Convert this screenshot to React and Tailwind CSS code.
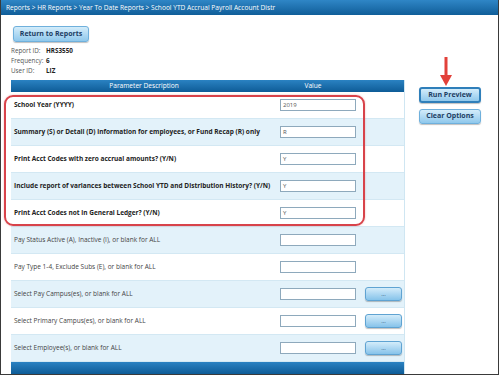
import React from 'react';

const rows = [
    { label: 'School Year (YYYY)', value: '2019', bold: true },
    { label: 'Summary (S) or Detail (D) information for employees, or Fund Recap (R) only', value: 'R', bold: true },
    { label: 'Print Acct Codes with zero accrual amounts? (Y/N)', value: 'Y', bold: true },
    { label: 'Include report of variances between School YTD and Distribution History? (Y/N)', value: 'Y', bold: true },
    { label: 'Print Acct Codes not in General Ledger? (Y/N)', value: 'Y', bold: true },
    { label: 'Pay Status Active (A), Inactive (I), or blank for ALL', value: '' },
    { label: 'Pay Type 1-4, Exclude Subs (E), or blank for ALL', value: '' },
    { label: 'Select Pay Campus(es), or blank for ALL', value: '', picker: true },
    { label: 'Select Primary Campus(es), or blank for ALL', value: '', picker: true },
    { label: 'Select Employee(s), or blank for ALL', value: '', picker: true },
];

const btn = 'flex items-center justify-center rounded-[3px] bg-gradient-to-b from-[#d3ecfa] to-[#8fc8ec] text-[#1d3d63] font-bold shadow-[0_1px_1px_rgba(0,0,0,0.25)]';

const App = () => {
    return (
        <div className="relative w-[499px] h-[375px] overflow-hidden border-r border-b border-l border-[#3a3a3a] bg-white font-['Open_Sans',sans-serif]">
            <div className="h-[15px] bg-gradient-to-b from-[#2f86c6] to-[#0f5e99] text-white text-[6.6px] leading-[15px] pl-[5px] whitespace-nowrap">
                Reports &gt; HR Reports &gt; Year To Date Reports &gt; School YTD Accrual Payroll Account Distr
            </div>

            <div className="flex">
                <div className="ml-[10px] w-[394px]">
                    <button className={`${btn} mt-[11px] ml-[2px] w-[76px] h-[16px] border border-[#6fb0dc] text-[7px]`}>
                        Return to Reports
                    </button>

                    <div className="mt-[4px] text-[6.3px] leading-[10px] text-[#555]">
                        <div className="flex"><span className="w-[35px]">Report ID:</span><span className="font-bold text-[#222]">HRS3550</span></div>
                        <div className="flex"><span className="w-[35px]">Frequency:</span><span className="font-bold text-[#222]">6</span></div>
                        <div className="flex"><span className="w-[35px]">User ID:</span><span className="font-bold text-[#222]">LIZ</span></div>
                    </div>

                    <div className="mt-[4px] border-r border-[#cfe6f2]">
                        <div className="flex h-[12px] bg-gradient-to-b from-[#2a82c2] to-[#0d5c97] text-white text-[6.6px] leading-[12px]">
                            <div className="w-[266px] text-center">Parameter Description</div>
                            <div className="w-[72px] text-center">Value</div>
                        </div>
                        {rows.map((r, i) => (
                            <div
                                key={i}
                                className={`flex items-center h-[27px] border-b border-[#d3e8f3] ${i % 2 === 1 ? 'bg-[#e3f2fa]' : 'bg-white'}`}
                            >
                                <div className={`w-[269px] pl-[3px] text-[6.5px] whitespace-nowrap ${r.bold ? 'font-bold text-[#222]' : 'text-[#444]'}`}>
                                    {r.label}
                                </div>
                                <div className="w-[76px] h-[12px] border border-[#8ea9bc] bg-white text-[6px] leading-[10px] pl-[2px] text-[#555]">
                                    {r.value}
                                </div>
                                {r.picker && (
                                    <button className={`${btn} ml-[9px] w-[37px] h-[14px] border border-[#5fa3d2] text-[6px] font-normal from-[#bfe3f8] to-[#86c3ea]`}>
                                        ...
                                    </button>
                                )}
                            </div>
                        ))}
                        <div className="h-[12px] bg-gradient-to-b from-[#2a82c2] to-[#0d5c97]"></div>
                    </div>
                </div>

                <div className="ml-[14px] mt-[72px] flex flex-col gap-[6px]">
                    <button className={`${btn} w-[62px] h-[16px] border-2 border-[#2f7fba] text-[7px]`}>
                        Run Preview
                    </button>
                    <button className={`${btn} w-[62px] h-[15px] border border-[#6fb0dc] text-[7px]`}>
                        Clear Options
                    </button>
                </div>
            </div>

            {/* annotation overlays */}
            <div className="absolute left-[3px] top-[95px] w-[361px] h-[131px] rounded-[9px] border-2 border-[#d8434a] shadow-[0_0_2px_rgba(216,67,74,0.4)]"></div>
            <svg className="absolute left-[439px] top-[57px]" width="12" height="30" viewBox="0 0 12 30">
                <rect x="4.5" y="0" width="3" height="20" fill="#e2413a" />
                <polygon points="0,18 12,18 6,29" fill="#e2413a" />
            </svg>
        </div>
    );
};

export default App;
